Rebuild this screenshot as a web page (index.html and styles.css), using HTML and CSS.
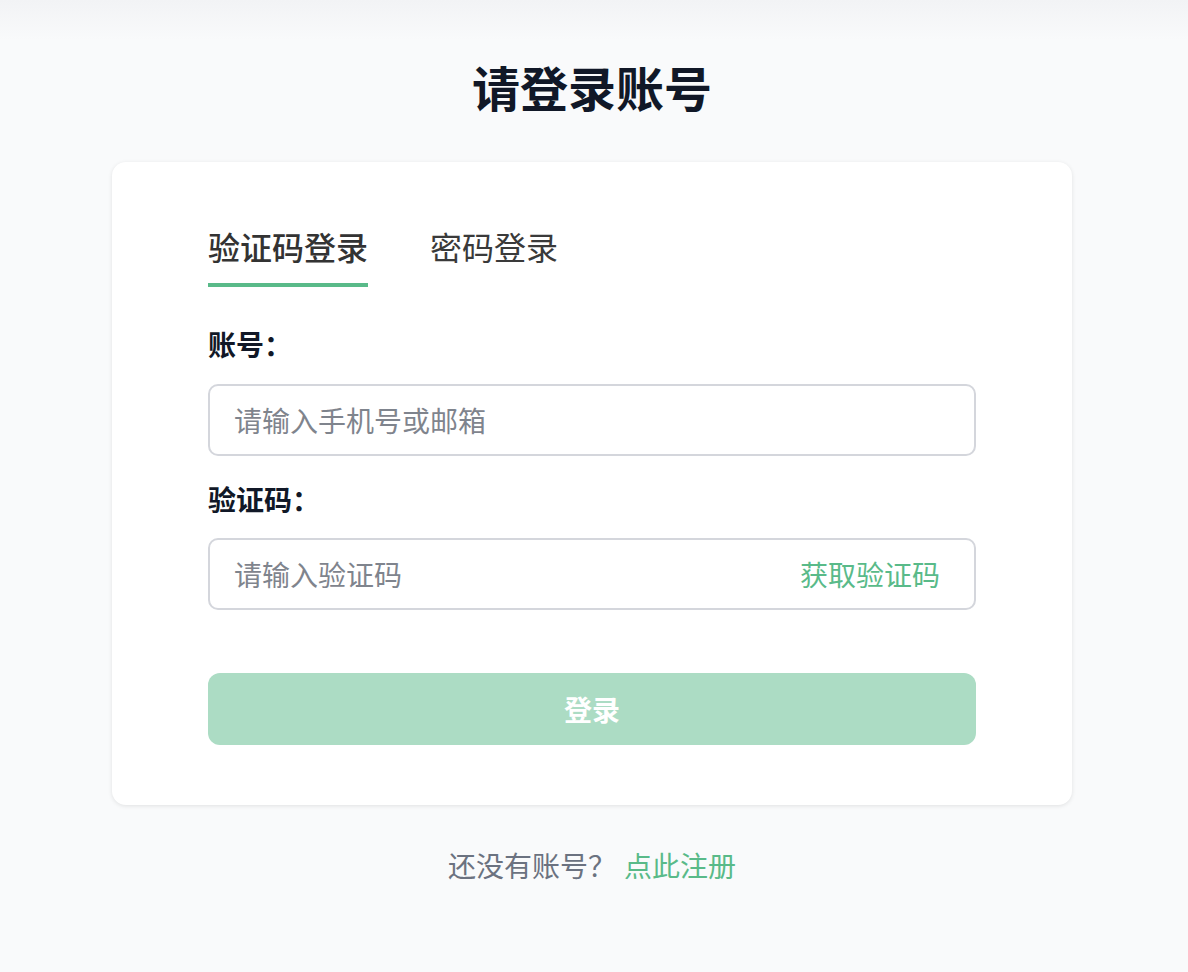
FILE: index.html
```html
<!DOCTYPE html>
<html lang="zh-CN">
<head>
<meta charset="utf-8">
<title>请登录账号</title>
<link rel="stylesheet" href="styles.css">
</head>
<body>
<main class="page">
  <h1 class="title">请登录账号</h1>
  <section class="card">
    <nav class="tabs">
      <span class="tab tab-active">验证码登录</span>
      <span class="tab">密码登录</span>
    </nav>
    <form class="form">
      <div class="field">
        <label class="label" for="account">账号：</label>
        <div class="input-box">
          <input class="input" id="account" type="text" placeholder="请输入手机号或邮箱">
        </div>
      </div>
      <div class="field">
        <label class="label" for="code">验证码：</label>
        <div class="input-box">
          <input class="input" id="code" type="text" placeholder="请输入验证码">
          <span class="get-code">获取验证码</span>
        </div>
      </div>
      <button class="submit" type="button">登录</button>
    </form>
  </section>
  <p class="footer">还没有账号？<a class="link" href="#">点此注册</a></p>
</main>
</body>
</html>
```
FILE: styles.css
```css
* { box-sizing: border-box; }
html, body { margin: 0; padding: 0; }
body {
  background: linear-gradient(to bottom, #f2f3f5 0px, #f9fafb 40px, #f9fafb 100%);
  min-height: 972px;
  font-family: "Noto Sans CJK SC", "Noto Sans", sans-serif;
  color: #111827;
}
.page {
  display: flex;
  flex-direction: column;
  align-items: center;
  padding: 62px 4px 0 0;
}
.title {
  margin: 0;
  font-size: 48px;
  line-height: 48px;
  font-weight: 700;
  color: #111827;
}
.card {
  margin-top: 52px;
  width: 960px;
  background: #fff;
  border-radius: 14px;
  box-shadow: 0 1px 4px rgba(0, 0, 0, 0.1);
  padding: 68px 96px 60px;
}
.tabs {
  display: flex;
  gap: 62px;
}
.tab {
  font-size: 32px;
  line-height: 32px;
  color: #3a3a3a;
  padding-bottom: 21px;
  border-bottom: 4px solid transparent;
}
.tab-active {
  font-weight: 500;
  color: #333;
  border-bottom-color: #59ba89;
}
.form {
  display: flex;
  flex-direction: column;
  margin-top: 43px;
}
.field {
  display: flex;
  flex-direction: column;
  margin-bottom: 29px;
}
.field + .field { margin-bottom: 63px; }
.label {
  font-size: 28px;
  line-height: 28px;
  font-weight: 600;
  color: #111827;
  margin-bottom: 26px;
}
.field + .field .label { margin-bottom: 25px; }
.input-box {
  display: flex;
  align-items: center;
  height: 72px;
  border: 2px solid #d4d6dc;
  border-radius: 10px;
  padding: 0 34px 0 24px;
  background: #fff;
}
.input {
  flex: 1;
  min-width: 0;
  border: 0;
  outline: 0;
  background: transparent;
  font-family: inherit;
  font-size: 28px;
  color: #111827;
  padding: 0;
}
.input::placeholder { color: #7f848d; }
.get-code {
  font-size: 28px;
  color: #59ba89;
  white-space: nowrap;
}
.submit {
  height: 72px;
  border: 0;
  border-radius: 12px;
  background: #acdcc4;
  color: #fff;
  font-family: inherit;
  font-size: 28px;
  font-weight: 700;
}
.footer {
  margin: 46px 0 0;
  font-size: 28px;
  line-height: 28px;
  color: #6b7280;
}
.link {
  margin-left: 8px;
  color: #59ba89;
  text-decoration: none;
}
```
